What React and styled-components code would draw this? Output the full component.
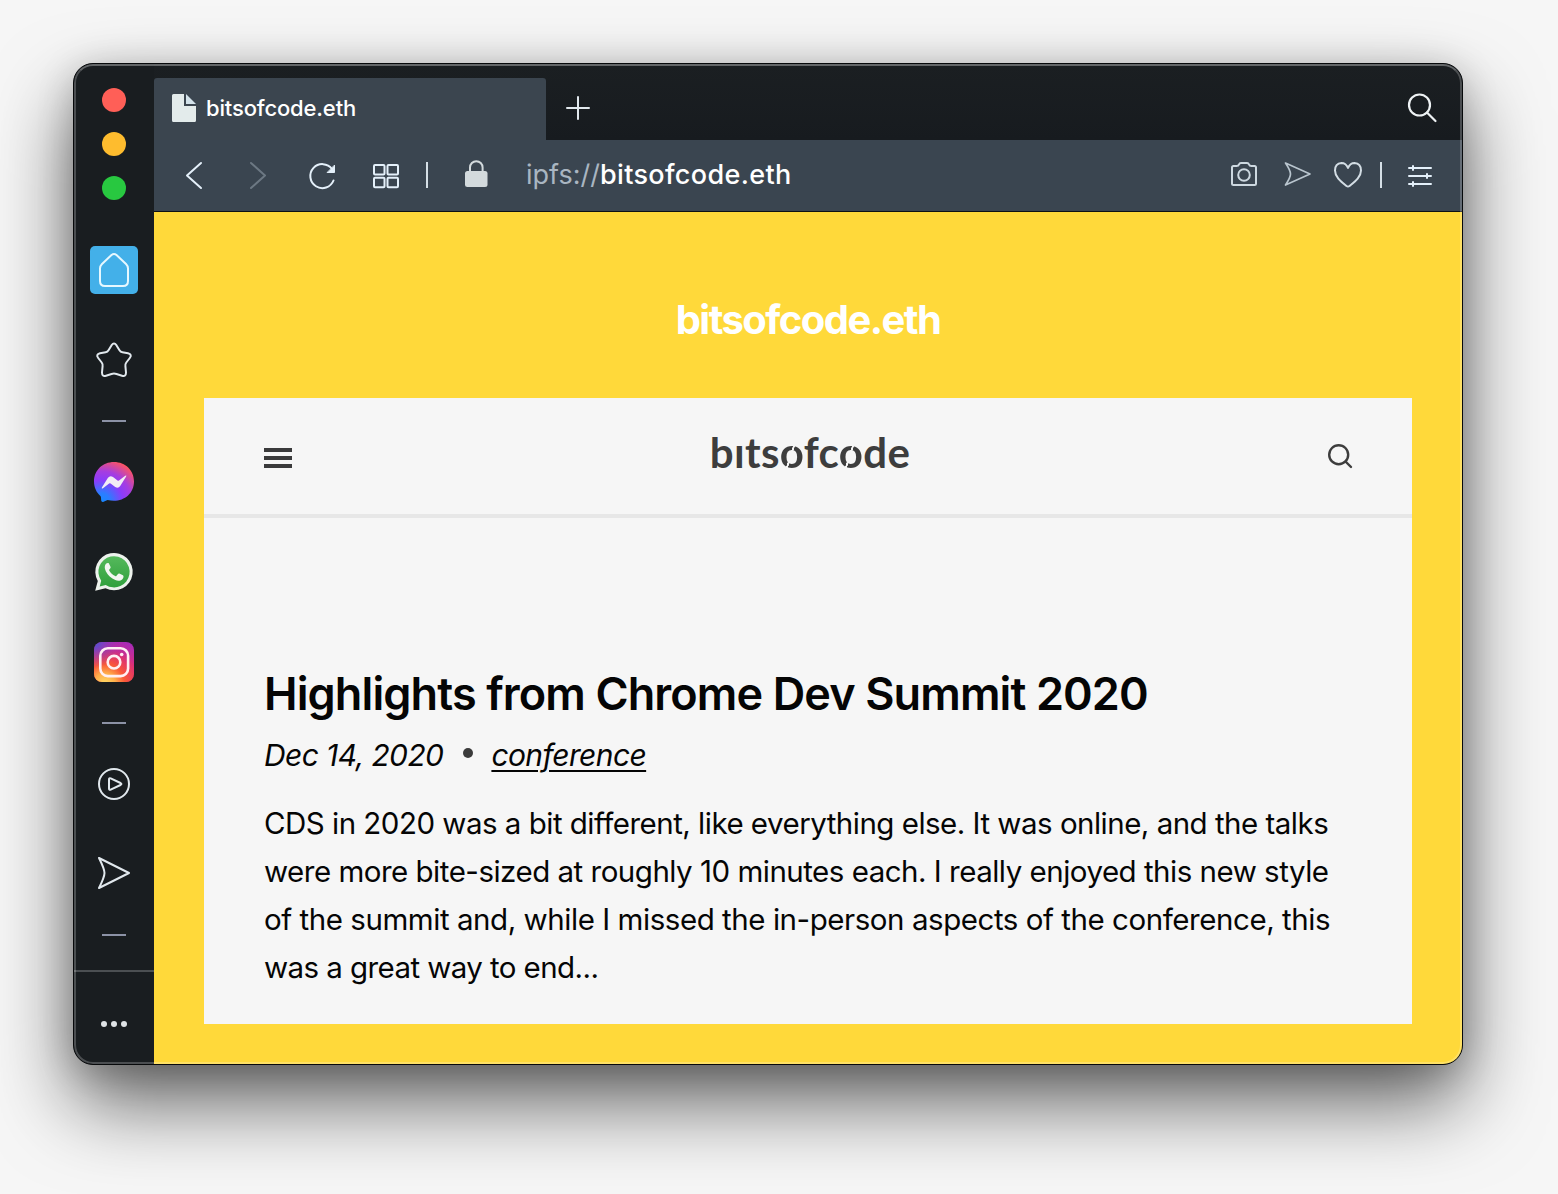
import React from 'react';
import styled, { createGlobalStyle } from 'styled-components';

const Global = createGlobalStyle`
  *, *::before, *::after { box-sizing: border-box; }
  body { margin: 0; background: #f6f6f6; font-family: Inter, "Liberation Sans", sans-serif; overflow: hidden; }
  h1, h2, p { margin: 0; font-weight: 400; }
  svg { display: block; flex: none; overflow: visible; }
  a { color: inherit; }
`;

const Desktop = styled.div`
  width: 1558px;
  height: 1194px;
  padding: 63px 95px 129px 73px;
  background: #f6f6f6;
  overflow: hidden;
`;

const Window = styled.div`
  position: relative;
  display: flex;
  width: 1390px;
  height: 1002px;
  border: 1px solid #07090b;
  border-radius: 20px;
  overflow: hidden;
  background: #191d20;
  box-shadow: 0 38px 80px rgba(0, 0, 0, 0.6), 0 6px 36px rgba(0, 0, 0, 0.18);
  &::after {
    content: '';
    position: absolute;
    inset: 0;
    border-radius: 19px;
    border: 2px solid rgba(255, 255, 255, 0.22);
    border-top-color: rgba(255, 255, 255, 0.32);
    pointer-events: none;
  }
`;

const Sidebar = styled.nav`
  width: 80px;
  flex: none;
  display: flex;
  flex-direction: column;
  align-items: center;
  padding-top: 24px;
`;

const Dot = styled.span`
  width: 24px;
  height: 24px;
  margin-bottom: 20px;
  border-radius: 50%;
  background: ${(p) => p.$color};
`;

const SideItem = styled.div`
  display: flex;
  align-items: center;
  justify-content: center;
  width: 48px;
  height: 48px;
  flex: none;
  margin-top: ${(p) => p.$gap}px;
  border-radius: 5px;
  background: ${(p) => (p.$active ? '#43b0e9' : 'transparent')};
`;

const Dash = styled.span`
  width: 24px;
  height: 2px;
  flex: none;
  margin-top: ${(p) => p.$gap}px;
  background: #8c92a6;
`;

const SideFooter = styled.div`
  width: 100%;
  flex: 1;
  margin-top: 34px;
  border-top: 2px solid #4b4f52;
  display: flex;
  justify-content: center;
  gap: 4px;
  padding-top: 49px;
`;

const MoreDot = styled.i`
  width: 6px;
  height: 6px;
  border-radius: 50%;
  background: #dfe3e5;
`;

const Main = styled.div`
  flex: 1;
  min-width: 0;
  display: flex;
  flex-direction: column;
`;

const TabStrip = styled.div`
  height: 76px;
  flex: none;
  padding: 14px 25px 0 0;
  display: flex;
  background: linear-gradient(#1b1f22, #171b1f);
`;

const Tab = styled.div`
  width: 392px;
  height: 62px;
  padding: 0 0 2px 18px;
  display: flex;
  align-items: center;
  gap: 10px;
  background: #3b454f;
  border-radius: 3px 3px 0 0;
  color: #fff;
`;

const TabTitle = styled.span`
  font-size: 22px;
  font-weight: 500;
  line-height: 28px;
  letter-spacing: -0.15px;
`;

const NewTab = styled.div`
  margin-left: 20px;
  padding-top: 18px;
  flex: 1;
`;

const TabSearch = styled.div`
  padding-top: 15px;
`;

const Toolbar = styled.div`
  height: 72px;
  flex: none;
  display: flex;
  align-items: center;
  background: #3a4550;
  border-bottom: 1px solid #0d1114;
`;

const Tool = styled.span`
  display: flex;
  flex: none;
  margin-left: ${(p) => p.$gap}px;
  padding-bottom: ${(p) => p.$raise || 0}px;
`;

const Bar = styled.span`
  width: 2px;
  height: 26px;
  margin: -1px 0 0 ${(p) => p.$gap}px;
  background: #d5dfe6;
`;

const Address = styled.div`
  flex: 1;
  margin: -2px 0 0 38px;
  font-size: 27px;
  font-weight: 500;
  line-height: 34px;
  letter-spacing: 0.35px;
  color: #fff;
`;

const Scheme = styled.span`
  color: #a9b5c1;
  font-weight: 400;
  letter-spacing: 0;
`;

const Page = styled.main`
  flex: 1;
  background: #ffd93a;
  padding: 84px 50px 0;
`;

const SiteName = styled.h1`
  text-align: center;
  font-size: 40px;
  font-weight: 700;
  line-height: 48px;
  letter-spacing: -1.55px;
  color: #fff;
`;

const Card = styled.section`
  height: 626px;
  margin-top: 54px;
  background: #f6f6f6;
`;

const CardHeader = styled.header`
  height: 120px;
  border-bottom: 4px solid #e7e7e7;
  padding: 0 60px;
  display: flex;
  align-items: center;
  justify-content: space-between;
`;

const Logo = styled.div`
  font-family: Lato, sans-serif;
  font-weight: 700;
  font-size: 42px;
  line-height: 50px;
  margin: -8px 0 0 0;
  letter-spacing: 0.35px;
  color: #3d3d3d;
  white-space: nowrap;
`;

const SplitO = styled.span`
  color: transparent;
  background: linear-gradient(108deg, #3d3d3d 47%, transparent 48%, transparent 52%, #3d3d3d 53%);
  background-clip: text;
  -webkit-background-clip: text;
`;

const Burger = styled.div`
  width: 28px;
  height: 20px;
  margin-top: 4px;
  display: flex;
  flex-direction: column;
  justify-content: space-between;
`;

const BurgerLine = styled.i`
  height: 4px;
  background: #3a3a3b;
`;

const Article = styled.article`
  padding: 146px 60px 0;
  color: #050505;
`;

const Title = styled.h2`
  font-size: 45px;
  font-weight: 600;
  line-height: 60px;
  letter-spacing: -0.88px;
  white-space: nowrap;
`;

const Meta = styled.div`
  display: flex;
  align-items: center;
  height: 48px;
  margin-top: 7px;
  font-size: 30px;
  font-style: italic;
  letter-spacing: -0.6px;
  white-space: nowrap;
`;

const Bullet = styled.i`
  width: 10px;
  height: 10px;
  border-radius: 50%;
  margin: -4px 18px 0 20px;
  background: #3b3b3b;
`;

const Category = styled.a`
  text-decoration: underline;
  text-decoration-thickness: 2px;
  text-underline-offset: 4px;
`;

const Excerpt = styled.p`
  margin-top: 20px;
  font-size: 29.5px;
  line-height: 48px;
  white-space: nowrap;
`;

const Line = styled.span`
  display: block;
  letter-spacing: ${(p) => p.$track}px;
`;

const Icon = ({ w, h, sw = 2, color = '#e1e8ed', children }) => (
  <svg width={w} height={h} viewBox={`0 0 ${w} ${h}`} fill="none" stroke={color} strokeWidth={sw} strokeLinecap="round" strokeLinejoin="round">
    {children}
  </svg>
);

const lines = [
  ['CDS in 2020 was a bit different, like everything else. It was online, and the talks', -0.51],
  ['were more bite-sized at roughly 10 minutes each. I really enjoyed this new style', -0.5],
  ['of the summit and, while I missed the in-person aspects of the conference, this', -0.45],
  ['was a great way to end...', -0.58],
];

export default function App() {
  return (
    <>
      <Global />
      <Desktop>
        <Window>
          <Sidebar>
            <Dot $color="#ff5f57" />
            <Dot $color="#febc2e" />
            <Dot $color="#28c840" />
            <SideItem $gap={26} $active>
              <Icon w={30} h={34} color="#e6f8ff">
                <path d="M12.500 2Q15 0 17.500 2L27 11Q29 13 29 15.500V28Q29 33 24 33H6Q1 33 1 28V15.500Q1 13 3 11Z" />
              </Icon>
            </SideItem>
            <SideItem $gap={42}>
              <Icon w={34} h={34}>
                <path d="M14.600 2.200Q17 -1 19.400 2.200L22.500 7.300Q23.500 9 25.400 9.300L31 10.300Q35.500 11.500 32.800 15L29.300 19.500Q28 21.200 28.400 23.200L29 29.500Q29 34 25 32.700L19.500 31Q17 30.200 14.500 31L9 32.700Q5 34 5 29.500L5.600 23.200Q6 21.200 4.700 19.500L1.200 15Q-1.500 11.500 3 10.300L8.600 9.300Q10.500 9 11.500 7.300Z" />
              </Icon>
            </SideItem>
            <Dash $gap={36} />
            <SideItem $gap={36}>
              <svg width="40" height="40" viewBox="0 0 40 40">
                <defs>
                  <radialGradient id="msg" cx=".18" cy="1" r="1.1">
                    <stop offset="0" stopColor="#168aff" />
                    <stop offset=".2" stopColor="#2b7dff" />
                    <stop offset=".5" stopColor="#8b3cfa" />
                    <stop offset=".7" stopColor="#a63de0" />
                    <stop offset="1" stopColor="#ff5560" />
                  </radialGradient>
                </defs>
                <path d="M20 0C8.700 0 0 8.300 0 19.500C0 25.400 2.400 30.400 6.400 34C7.200 34.700 7 37 7.200 38.500C7.400 39.800 8.400 40.300 9.600 39.700L13.500 38C27.500 41.500 40 33 40 19.500C40 8.300 31.300 0 20 0Z" fill="url(#msg)" />
                <path d="M8 25.200L14 15.800Q16 13 19 15L23.500 18.400Q24.300 19 25 18.400L31.200 13.800Q33 13 32 14.800L26.200 24.100Q24.200 27 21.200 25L16.600 21.500Q15.900 21 15.100 21.500L9 26.200Q7 27 8 25.200Z" fill="#f2eef5" />
              </svg>
            </SideItem>
            <SideItem $gap={42}>
              <svg width="38" height="38" viewBox="0 0 38 38">
                <defs>
                  <linearGradient id="wa" x1="0" y1="0" x2="0" y2="1">
                    <stop offset="0" stopColor="#55b95c" />
                    <stop offset="1" stopColor="#2fa03c" />
                  </linearGradient>
                </defs>
                <path d="M.2 37.800L2.800 28A18.700 18.700 0 1 1 10.500 35.300Z" fill="#edf2ed" />
                <path d="M4.700 33.400L6.200 27.700A15.600 15.600 0 1 1 10.700 32Z" fill="url(#wa)" />
                <path d="M13.800 10.300C13.200 9.700 11.700 9.900 11 10.800C6.500 16 15.500 27.200 23.500 27.700C26.500 27.700 28.600 25.900 28.500 23.200Q28.500 22.700 27.900 22.300L24.300 20.600Q23.600 20.300 23 21L21.300 23Q20.900 23.400 20.200 23C17.500 21.800 15.600 20 14.200 17.400Q14 17 14.300 16.600L15.500 14.900Q15.800 14.400 15.500 13.800Z" fill="#f3f6f3" />
              </svg>
            </SideItem>
            <SideItem $gap={42}>
              <svg width="40" height="40" viewBox="0 0 40 40">
                <defs>
                  <linearGradient id="ig" x1=".9" y1="0" x2=".55" y2="1">
                    <stop offset="0" stopColor="#a32bbd" />
                    <stop offset=".5" stopColor="#d92d7c" />
                    <stop offset="1" stopColor="#ee404f" />
                  </linearGradient>
                  <radialGradient id="igy" cx=".27" cy="1.05" r=".9">
                    <stop offset="0" stopColor="#ffdc65" />
                    <stop offset=".3" stopColor="#ffad4a" />
                    <stop offset=".55" stopColor="#fa5a38" />
                    <stop offset="1" stopColor="#f04050" stopOpacity="0" />
                  </radialGradient>
                  <radialGradient id="igb" cx="0" cy="0" r=".65">
                    <stop offset="0" stopColor="#3f58d8" />
                    <stop offset="1" stopColor="#8c35c8" stopOpacity="0" />
                  </radialGradient>
                </defs>
                <rect width="40" height="40" rx="8" fill="url(#ig)" />
                <rect width="40" height="40" rx="8" fill="url(#igy)" />
                <rect width="40" height="40" rx="8" fill="url(#igb)" />
                <g fill="none" stroke="#fff0f3" strokeWidth="2.600">
                  <rect x="6.300" y="6.300" width="27.800" height="27.800" rx="7.500" />
                  <circle cx="20" cy="20.200" r="6.300" />
                </g>
                <circle cx="27.700" cy="12.500" r="1.800" fill="#fff0f3" />
              </svg>
            </SideItem>
            <Dash $gap={36} />
            <SideItem $gap={36}>
              <Icon w={32} h={32}>
                <circle cx="16" cy="16" r="15" />
                <path d="M11 11.500Q11 9.600 12.700 10.400L22.500 15Q24.300 16 22.500 17L12.700 21.600Q11 22.400 11 20.500Z" />
              </Icon>
            </SideItem>
            <SideItem $gap={41}>
              <Icon w={32} h={32}>
                <path d="M1 1L31 16L1 31Q6.500 20 6.500 16Q6.500 12 1 1Z" />
              </Icon>
            </SideItem>
            <Dash $gap={37} />
            <SideFooter>
              <MoreDot />
              <MoreDot />
              <MoreDot />
            </SideFooter>
          </Sidebar>
          <Main>
            <TabStrip>
              <Tab>
                <svg width="24" height="28" viewBox="0 0 24 28">
                  <path d="M1.500 0H12V12H24V26.500Q24 28 22.500 28H1.500Q0 28 0 26.500V1.500Q0 0 1.500 0Z" fill="#e3ebeb" />
                  <path d="M14 0L24 10H14Z" fill="#d3e2ea" />
                </svg>
                <TabTitle>bitsofcode.eth</TabTitle>
              </Tab>
              <NewTab>
                <Icon w={24} h={24}><path d="M12 1V23M1 12H23" /></Icon>
              </NewTab>
              <TabSearch>
                <Icon w={30} h={30} sw={2.2} color="#eef2f4">
                  <circle cx="12.500" cy="12" r="10.500" />
                  <path d="M20 19.500L28.500 28" />
                </Icon>
              </TabSearch>
            </TabStrip>
            <Toolbar>
              <Tool $gap={32}>
                <Icon w={16} h={27} color="#e4f0fa"><path d="M15 1L1 13.500L15 26" /></Icon>
              </Tool>
              <Tool $gap={48}>
                <Icon w={16} h={27} color="#6c7883"><path d="M1 1L15 13.500L1 26" /></Icon>
              </Tool>
              <Tool $gap={43}>
                <Icon w={28} h={26} color="#e4f0fa">
                  <path d="M23 6A12 12 0 1 0 24.500 17.500" />
                  <path d="M25.500 2.500V9.500H18.500Z" fill="#e4f0fa" strokeWidth="1" />
                </Icon>
              </Tool>
              <Tool $gap={36}>
                <Icon w={26} h={24} color="#e4f0fa">
                  <rect x="1" y="1" width="10.500" height="9.500" rx="1" />
                  <rect x="14.500" y="1" width="10.500" height="9.500" rx="1" />
                  <rect x="1" y="13.800" width="10.500" height="9.500" rx="1" />
                  <rect x="14.500" y="13.800" width="10.500" height="9.500" rx="1" />
                </Icon>
              </Tool>
              <Bar $gap={27} />
              <Tool $gap={37} $raise={2}>
                <svg width="23" height="30" viewBox="0 0 23 30">
                  <path d="M5 13V7.500A6.300 6.300 0 0 1 17.600 7.500V13" fill="none" stroke="#d3dadd" strokeWidth="2" />
                  <rect y="11" width="22.500" height="16" rx="2.500" fill="#d3dadd" />
                </svg>
              </Tool>
              <Address><Scheme>ipfs://</Scheme>bitsofcode.eth</Address>
              <Tool $gap={0} $raise={3}>
                <Icon w={26} h={24} color="#cdd8e0">
                  <path d="M1 5.500Q1 4 2.500 4H5.500Q7.500 4 8 2.500Q8.500 1 10 1H16Q17.500 1 18 2.500Q18.500 4 20.500 4H23.500Q25 4 25 5.500V21.500Q25 23 23.500 23H2.500Q1 23 1 21.500Z" />
                  <circle cx="13" cy="13" r="5.800" />
                </Icon>
              </Tool>
              <Tool $gap={27} $raise={3}>
                <Icon w={27} h={24} sw={1.700} color="#b9c5ce"><path d="M1.500 1L26 12L1.500 23Q6.500 15.500 6.500 12Q6.500 8.500 1.500 1Z" /></Icon>
              </Tool>
              <Tool $gap={23} $raise={2}>
                <Icon w={28} h={26} color="#d3dde4"><path d="M14 6Q12 1 7.500 1Q1 1.500 1 8.500C1 15 7 19.500 12.500 24Q14 25 15.500 24C21 19.500 27 15 27 8.500Q27 1.500 20.500 1Q16 1 14 6Z" /></Icon>
              </Tool>
              <Bar $gap={18} />
              <Tool $gap={26}>
                <Icon w={24} h={22} color="#e4f0fa">
                  <path d="M1 3H23M5 1V5M1 11H23M19 9V13M1 19H23M5 17V21" />
                </Icon>
              </Tool>
              <Tool $gap={30} />
            </Toolbar>
            <Page>
              <SiteName>bitsofcode.eth</SiteName>
              <Card>
                <CardHeader>
                  <Burger><BurgerLine /><BurgerLine /><BurgerLine /></Burger>
                  <Logo>bıts<SplitO>o</SplitO>fc<SplitO>o</SplitO>de</Logo>
                  <Icon w={24} h={24} sw={2.400} color="#3d3d3d">
                    <circle cx="10.700" cy="10.700" r="9.500" />
                    <path d="M17.500 17.500L23 23" />
                  </Icon>
                </CardHeader>
                <Article>
                  <Title>Highlights from Chrome Dev Summit 2020</Title>
                  <Meta>
                    <span>Dec 14, 2020</span>
                    <Bullet />
                    <Category>conference</Category>
                  </Meta>
                  <Excerpt>
                    {lines.map(([text, track]) => <Line key={text} $track={track}>{text}</Line>)}
                  </Excerpt>
                </Article>
              </Card>
            </Page>
          </Main>
        </Window>
      </Desktop>
    </>
  );
}
